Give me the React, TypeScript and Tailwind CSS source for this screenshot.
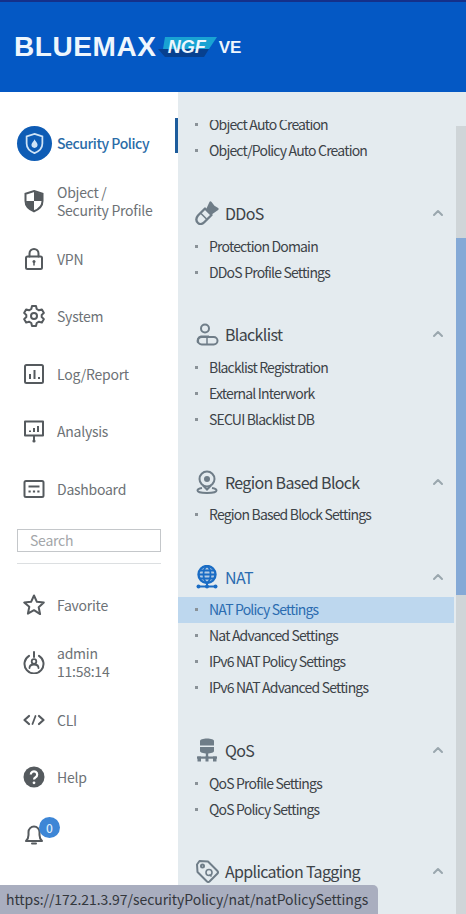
import React from "react";
import { ChevronUp } from "lucide-react";

const font = "font-['Noto_Sans_CJK_KR','Noto_Sans',sans-serif]";
const G = "#555a5e";

const Ico = ({ children, size = 24 }: { children: React.ReactNode; size?: number }) => (
  <svg width={size} height={size} viewBox="0 0 24 24" fill="none" stroke={G} strokeWidth={2} strokeLinejoin="round" strokeLinecap="round">
    {children}
  </svg>
);

const ShieldHalf = () => (
  <svg width="24" height="24" viewBox="0 0 24 24">
    <path d="M12 2 20.500 4.800V12c0 5-3.500 8.300-8.500 10.300C7 20.300 3.500 17 3.500 12V4.800Z" fill="none" stroke={G} strokeWidth="2" />
    <path d="M12 2.500 20 5.200V12H12ZM12 12V22C7.500 20 4 17 4 12Z" fill={G} />
  </svg>
);
const Lock = () => (
  <Ico><path d="M7.500 9.500V6.500a4.500 4.500 0 0 1 9 0v3" /><rect x="4" y="9.500" width="16" height="12.500" rx="1.500" /><circle cx="12" cy="14.500" r="1.500" fill={G} stroke="none" /><path d="M12 15v3" strokeWidth="1.500" /></Ico>
);
const Gear = () => (
  <Ico><path d="M10 2h4l.7 3 2.300 1.300 2.900-.9 2 3.500-2.200 2.100v2l2.200 2.100-2 3.500-2.900-.9-2.300 1.300-.7 3h-4l-.7-3L7 17.700l-2.900.9-2-3.500L4.300 13v-2L2.100 8.900l2-3.500 2.900.9L9.300 5Z" /><circle cx="12" cy="12" r="3" /></Ico>
);
const Report = () => (
  <Ico><rect x="3" y="3" width="18" height="18" rx="1.500" /><path d="M8 17v-5M12.500 17V8M17 17v-2" strokeLinecap="butt" /></Ico>
);
const Analysis = () => (
  <Ico><path d="M3 2.500h18v14H3z" /><path d="M8 13v-1.500M12 13V9M16 13V7" strokeLinecap="butt" /><path d="M12 17v4" /><circle cx="12" cy="22" r="1.600" fill={G} stroke="none" /></Ico>
);
const Dash = () => (
  <Ico><rect x="2.500" y="4" width="19" height="16" rx="1.500" /><path d="M6.500 9.500h11" strokeLinecap="butt" /><path d="M6.500 14.500h2.200M10.900 14.500h2.200M15.300 14.500h2.200" strokeLinecap="butt" /></Ico>
);
const Star = () => (
  <Ico><path d="M12 2.500l2.900 6.300 6.900.8-5.100 4.700 1.400 6.800L12 17.200l-6.100 3.400 1.400-6.800L2.200 9.600l6.900-.8Z" /></Ico>
);
const Admin = () => (
  <Ico><path d="M7 5.800a9.500 9.500 0 1 0 10 0" /><path d="M12 2v5" /><circle cx="12" cy="11.500" r="2.300" strokeWidth="1.800" /><path d="M7.500 18c0-2.500 2-3.500 4.500-3.500s4.500 1 4.500 3.500" strokeWidth="1.800" /></Ico>
);
const Cli = () => (
  <Ico><path d="M7 8l-4.500 4L7 16M17 8l4.500 4L17 16" strokeWidth="2.200" /><path d="M13.500 8l-3 8" strokeWidth="1.800" /></Ico>
);
const Help = () => (
  <svg width="24" height="24" viewBox="0 0 24 24">
    <circle cx="12" cy="12" r="10.500" fill={G} />
    <path d="M8.800 9.500a3.200 3.200 0 1 1 4.800 2.800c-1 .6-1.600 1.100-1.600 2.200" fill="none" stroke="#fff" strokeWidth="2.200" />
    <circle cx="12" cy="17.800" r="1.400" fill="#fff" />
  </svg>
);
const Bell = () => (
  <Ico><path d="M4 19h16c-1.500-1.500-2.500-3-2.500-6V10a5.500 5.500 0 0 0-11 0v3c0 3-1 4.500-2.500 6Z" /><path d="M10 21.500h4" /></Ico>
);

const HG = "#6f7d88";
const Ddos = () => (
  <svg width="24" height="24" viewBox="0 0 24 24" fill="none" stroke={HG} strokeWidth="2.300" strokeLinejoin="round">
    <path d="M3 22C1 20 1 17 3 14.500L10 7.500 16.500 14 9.500 21C7.500 23 5 24 3 22Z" />
    <path d="M12.500 8 15.500 1.500 18.500 5.500 22.500 8 16 12.500Z" fill={HG} />
    <path d="M6 12.500l5.500 5.500" strokeWidth="1.600" />
  </svg>
);
const Person = () => (
  <svg width="24" height="24" viewBox="0 0 24 24" fill="none" stroke={HG} strokeWidth="2">
    <circle cx="10" cy="6.500" r="4" />
    <path d="M3 21c-1-3 0-6 3-6.500h8" />
    <rect x="3" y="15" width="19.500" height="7.500" rx="3.750" />
    <path d="M12 15.500v6.500" strokeWidth="1.500" />
  </svg>
);
const Pin = () => (
  <svg width="24" height="24" viewBox="0 0 24 24" fill="none" stroke={HG} strokeWidth="2">
    <circle cx="12" cy="9" r="7.500" />
    <circle cx="12" cy="9" r="3" fill={HG} stroke="none" />
    <path d="M8 15.500l4 4 4-4" />
    <path d="M7 18c-3 .5-4.500 1.500-4.500 2.500S5 23 12 23s9.500-1.500 9.500-2.500S20 18.500 17 18" />
  </svg>
);
const Globe = () => (
  <svg width="24" height="24" viewBox="0 0 24 24" fill="none" stroke="#1a6cc4" strokeWidth="1.800">
    <circle cx="12" cy="9.500" r="8.500" fill="#1a6cc4" fillOpacity="0.25" strokeWidth="2.400" />
    <ellipse cx="12" cy="9.500" rx="3.500" ry="8" />
    <path d="M4 9.500h16M5 5.500h14M5 13.500h14" />
    <path d="M12 17.500v3.500M3 21.500h18" strokeWidth="2" />
    <circle cx="3.500" cy="21.500" r="2" fill="#1a6cc4" stroke="none" />
    <circle cx="20.500" cy="21.500" r="2" fill="#1a6cc4" stroke="none" />
    <circle cx="12" cy="21.500" r="2" fill="#1a6cc4" stroke="none" />
  </svg>
);
const Qos = () => (
  <svg width="24" height="24" viewBox="0 0 24 24" fill={HG} stroke="none">
    <path d="M5 3C5 1.500 8 .5 12 .5S19 1.500 19 3V7.500H5Z" />
    <path d="M5 9h14V13c0 1.500-3 2.500-7 2.500S5 14.500 5 13Z" />
    <rect x="10.800" y="15" width="2.400" height="5" />
    <rect x="2" y="18.500" width="20" height="2.200" />
    <rect x="2.500" y="18.500" width="3.500" height="5" />
    <rect x="18" y="18.500" width="3.500" height="5" />
    <rect x="10.500" y="18.500" width="3" height="5" />
  </svg>
);
const Tag = () => (
  <svg width="24" height="24" viewBox="0 0 24 24" fill="none" stroke={HG} strokeWidth="2" strokeLinejoin="round">
    <path d="M2 5.500 4.500 2l8.500.5L22.500 12a2 2 0 0 1 0 2.500L14.500 22.500a2 2 0 0 1-2.500 0L2.500 13Z" />
    <circle cx="7.500" cy="7" r="1.500" />
    <circle cx="14" cy="13.500" r="3" strokeWidth="1.600" />
    <path d="M14.500 15.500l2 2" strokeWidth="1.600" />
  </svg>
);

type Row = { icon: React.ReactNode; label: string[] };
const rowsTop: Row[] = [
  { icon: <ShieldHalf />, label: ["Object /", "Security Profile"] },
  { icon: <Lock />, label: ["VPN"] },
  { icon: <Gear />, label: ["System"] },
  { icon: <Report />, label: ["Log/Report"] },
  { icon: <Analysis />, label: ["Analysis"] },
  { icon: <Dash />, label: ["Dashboard"] },
];
const rowsBottom: Row[] = [
  { icon: <Star />, label: ["Favorite"] },
  { icon: <Admin />, label: ["admin", "11:58:14"] },
  { icon: <Cli />, label: ["CLI"] },
  { icon: <Help />, label: ["Help"] },
];

const SideRow = ({ icon, label }: Row) => (
  <div className="flex h-[57.5px] items-center">
    <div className="flex w-[57px] shrink-0 justify-center pl-[11px]">
      <div className="flex w-[24px] justify-center">{icon}</div>
    </div>
    <div className="text-[14px] leading-[18px] tracking-[-0.25px] text-[#6d7276]">
      {label.map((l) => (
        <div key={l}>{l}</div>
      ))}
    </div>
  </div>
);

const sections = [
  { icon: <Ddos />, title: "DDoS", items: ["Protection Domain", "DDoS Profile Settings"] },
  { icon: <Person />, title: "Blacklist", items: ["Blacklist Registration", "External Interwork", "SECUI Blacklist DB"] },
  { icon: <Pin />, title: "Region Based Block", items: ["Region Based Block Settings"] },
  { icon: <Globe />, title: "NAT", active: "NAT Policy Settings", items: ["NAT Policy Settings", "Nat Advanced Settings", "IPv6 NAT Policy Settings", "IPv6 NAT Advanced Settings"] },
  { icon: <Qos />, title: "QoS", items: ["QoS Profile Settings", "QoS Policy Settings"] },
  { icon: <Tag />, title: "Application Tagging", items: [] as string[] },
];

const Item = ({ text, active }: { text: string; active?: boolean }) => (
  <div className={`flex h-[26px] items-center pl-[17px] text-[14px] tracking-[-0.82px] ${active ? "bg-[#bdd7ee] text-[#2b6cb0]" : "text-[#3d4348]"}`}>
    <span className="mr-[11px] h-[3px] w-[3px] bg-[#8a9298]" />
    {text}
  </div>
);

export default function App() {
  return (
    <div className={`relative flex h-[914px] w-[466px] flex-col overflow-hidden bg-white ${font}`}>
      <header className="flex h-[92px] shrink-0 items-center border-t-2 border-[#14308a] bg-[#0458c4] pl-[14px]">
        <span className="font-['Liberation_Sans',sans-serif] text-[28px] font-bold leading-none tracking-[0.6px] text-[#eef6fd]">BLUEMAX</span>
        <span className="relative flex h-[21px] w-[60px] items-center justify-center">
          <svg className="absolute inset-0" width="60" height="21" viewBox="0 0 60 21">
            <path d="M8 0H60L52 12H6Z" fill="#19a3d3" />
            <path d="M1 12H52L47 20H8Z" fill="#07408f" />
          </svg>
          <span className="relative font-['Liberation_Sans',sans-serif] text-[18px] font-bold italic leading-none text-[#eef6fd]">NGF</span>
        </span>
        <span className="ml-[2px] font-['Liberation_Sans',sans-serif] text-[17px] font-bold leading-none text-[#eef6fd]">VE</span>
      </header>

      <div className="flex min-h-0 flex-1">
        <aside className="flex w-[178px] shrink-0 flex-col pt-[23px]">
          <div className="relative flex h-[57.5px] items-center">
            <div className="ml-[17px] flex h-[35px] w-[35px] items-center justify-center rounded-full bg-[#0e5cb5]">
              <svg width="21" height="23" viewBox="0 0 24 26" fill="none" stroke="#cfe3f6" strokeWidth="2">
                <path d="M12 2 21 5V13c0 5-4 9-9 11-5-2-9-6-9-11V5Z" />
                <path d="M12 8c.5 2 3.500 3.500 3.500 6.500a3.500 3.500 0 0 1-7 0C8.500 12 11.500 10.500 12 8Z" fill="#cfe3f6" stroke="none" />
              </svg>
            </div>
            <span className="ml-[5px] text-[14px] font-medium tracking-[-0.45px] text-[#2a6ca8]">Security Policy</span>
            <div className="absolute right-0 top-[3px] h-[35px] w-[3px] bg-[#1d5c9c]" />
          </div>
          {rowsTop.map((r) => (
            <SideRow key={r.label[0]} {...r} />
          ))}
          <div className="mx-[17px] mt-[11px] flex h-[23px] shrink-0 items-center border border-[#c4c7ca] pl-[12px] text-[14px] tracking-[-0.25px] text-[#a3a6a9]">Search</div>
          <div className="mx-[17px] mt-[11px] h-px shrink-0 bg-[#dcdfe1]" />
          <div className="mt-[12.5px]">
            {rowsBottom.map((r) => (
              <SideRow key={r.label[0]} {...r} />
            ))}
          </div>
          <div className="relative ml-[22px] mt-[16px] h-[24px] w-[24px]">
            <Bell />
            <span className="absolute left-[17px] top-[-5px] flex h-[21px] w-[21px] items-center justify-center rounded-full bg-[#3d86d6] text-[12px] font-medium text-[#dcecfa]">0</span>
          </div>
        </aside>

        <main className="flex min-w-0 flex-1 bg-[#e4ebef]">
          <div className="flex min-w-0 flex-1 flex-col pt-[28px]">
            <div className="relative h-[17px] shrink-0 overflow-hidden">
              <div className="absolute top-[-9px] w-full"><Item text="Object Auto Creation" /></div>
            </div>
            <div className="mb-[30px]"><Item text="Object/Policy Auto Creation" /></div>
            {sections.map((s) => (
              <section key={s.title} className="mb-[29.3px] shrink-0 pr-[2px]">
                <div className="flex h-[40px] items-center pl-[17px] pr-[8px]">
                  <div className="flex h-[24px] w-[24px] shrink-0 items-center justify-center">{s.icon}</div>
                  <h3 className={`ml-[6px] flex-1 text-[16px] font-normal tracking-[-0.65px] ${s.active ? "text-[#2b6cb0]" : "text-[#3d4348]"}`}>{s.title}</h3>
                  <ChevronUp size={16} strokeWidth={3} color="#9aa7ae" />
                </div>
                <div>
                  {s.items.map((i) => (
                    <Item key={i} text={i} active={i === s.active} />
                  ))}
                </div>
              </section>
            ))}
          </div>
          <div className="flex w-[10px] shrink-0 flex-col pt-[34px]">
            <div className="flex-1 bg-[#cfd5d8] pt-[112px]">
              <div className="h-[357px] bg-[#84a9d6]" />
            </div>
          </div>
        </main>
      </div>

      <div className="absolute bottom-0 left-0 flex h-[29px] w-[378px] items-center rounded-tr-[5px] bg-[#a9aebf] pl-[6px] text-[14px] tracking-[-0.06px] text-[#33373d]">
        https://172.21.3.97/securityPolicy/nat/natPolicySettings
      </div>
    </div>
  );
}
